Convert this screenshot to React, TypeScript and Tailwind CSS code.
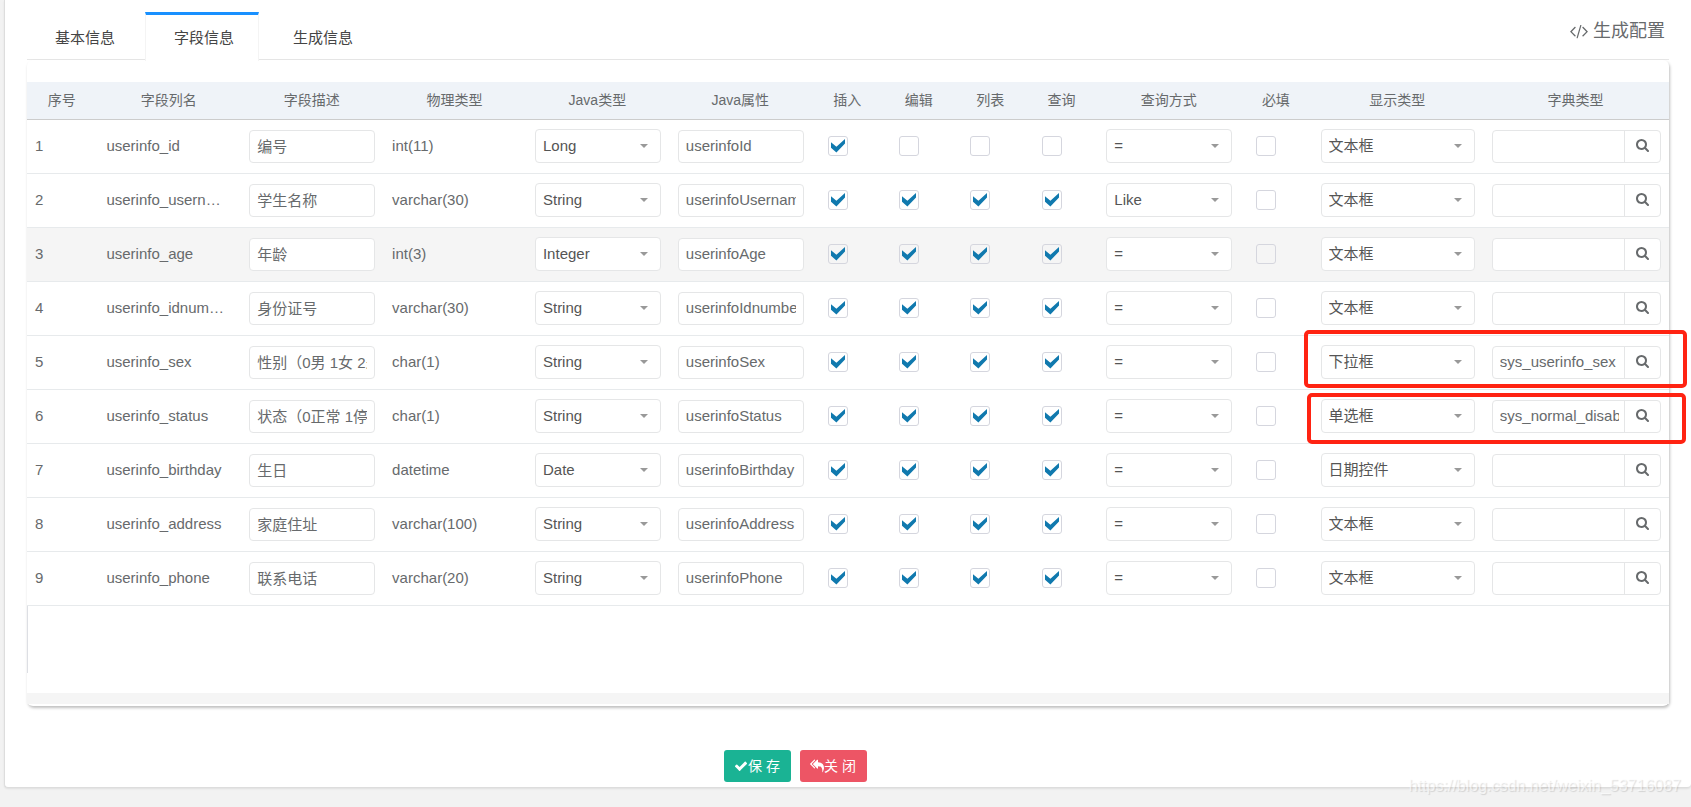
import { useState } from 'react'
import clsx from 'clsx'

interface Field {
  column: string
  comment: string
  dbType: string
  javaType: string
  javaField: string
  insert: boolean
  edit: boolean
  list: boolean
  query: boolean
  queryType: string
  htmlType: string
  dictType: string
}

const base = { insert: true, edit: true, list: true, query: true, queryType: '=', htmlType: '文本框', dictType: '' }

const fields: Field[] = [
  { ...base, column: 'userinfo_id', comment: '编号', dbType: 'int(11)', javaType: 'Long', javaField: 'userinfoId', edit: false, list: false, query: false },
  { ...base, column: 'userinfo_username', comment: '学生名称', dbType: 'varchar(30)', javaType: 'String', javaField: 'userinfoUsername', queryType: 'Like' },
  { ...base, column: 'userinfo_age', comment: '年龄', dbType: 'int(3)', javaType: 'Integer', javaField: 'userinfoAge' },
  { ...base, column: 'userinfo_idnumber', comment: '身份证号', dbType: 'varchar(30)', javaType: 'String', javaField: 'userinfoIdnumber' },
  { ...base, column: 'userinfo_sex', comment: '性别（0男 1女 2未知）', dbType: 'char(1)', javaType: 'String', javaField: 'userinfoSex', htmlType: '下拉框', dictType: 'sys_userinfo_sex' },
  { ...base, column: 'userinfo_status', comment: '状态（0正常 1停用）', dbType: 'char(1)', javaType: 'String', javaField: 'userinfoStatus', htmlType: '单选框', dictType: 'sys_normal_disable' },
  { ...base, column: 'userinfo_birthday', comment: '生日', dbType: 'datetime', javaType: 'Date', javaField: 'userinfoBirthday', htmlType: '日期控件' },
  { ...base, column: 'userinfo_address', comment: '家庭住址', dbType: 'varchar(100)', javaType: 'String', javaField: 'userinfoAddress' },
  { ...base, column: 'userinfo_phone', comment: '联系电话', dbType: 'varchar(20)', javaType: 'String', javaField: 'userinfoPhone' },
]

const columns = [
  { title: '序号', width: 'w-[4.35%]' },
  { title: '字段列名', width: 'w-[8.7%]' },
  { title: '字段描述', width: 'w-[8.7%]' },
  { title: '物理类型', width: 'w-[8.7%]' },
  { title: 'Java类型', width: 'w-[8.7%]' },
  { title: 'Java属性', width: 'w-[8.7%]' },
  { title: '插入', width: 'w-[4.35%]' },
  { title: '编辑', width: 'w-[4.35%]' },
  { title: '列表', width: 'w-[4.35%]' },
  { title: '查询', width: 'w-[4.35%]' },
  { title: '查询方式', width: 'w-[8.7%]' },
  { title: '必填', width: 'w-[4.35%]' },
  { title: '显示类型', width: 'w-[10.43%]' },
  { title: '字典类型', width: 'w-[11.27%]' },
]

const javaTypes = ['Long', 'String', 'Integer', 'Double', 'BigDecimal', 'Date']
const queryTypes = ['=', '!=', '>', '>=', '<', '<=', 'Like', 'Between']
const htmlTypes = ['文本框', '文本域', '下拉框', '单选框', '复选框', '日期控件']
const tabs = ['基本信息', '字段信息', '生成信息']

const iconPaths = {
  search:
    'M1152 704q0-185-131.5-316.5t-316.5-131.5-316.5 131.5-131.5 316.5 131.5 316.5 316.5 131.5 316.5-131.5 131.5-316.5zm512 832q0 52-38 90t-90 38q-54 0-90-38l-343-342q-179 124-399 124-143 0-273.5-55.5t-225-150-150-225-55.5-273.5 55.5-273.5 150-225 225-150 273.5-55.5 273.5 55.5 225 150 150 225 55.5 273.5q0 220-124 399l343 343q37 37 37 90z',
  check:
    'M1671 566q0 40-28 68l-724 724-136 136q-28 28-68 28t-68-28l-136-136-362-362q-28-28-28-68t28-68l136-136q28-28 68-28t68 28l294 295 656-657q28-28 68-28t68 28l136 136q28 28 28 68z',
  replyAll:
    'M640 1082v70q0 42-39 59-13 5-25 5-27 0-45-19l-512-512q-19-19-19-45t19-45l512-512q29-31 70-14 39 17 39 59v69l-397 398q-19 19-19 45t19 45zm1152 58q0 58-17 133.5t-38.5 138-48 125-40.5 90.5l-20 40q-8 17-28 17-6 0-9-1-25-8-23-34 43-400-106-565-64-71-170.5-110.5t-267.5-52.5v251q0 42-39 59-13 5-25 5-27 0-45-19l-512-512q-19-19-19-45t19-45l512-512q29-31 70-14 39 17 39 59v262q411 28 599 221 169 173 169 509z',
  code: 'M681 1399l-50 50q-10 10-23 10t-23-10l-466-466q-10-10-10-23t10-23l466-466q10-10 23-10t23 10l50 50q10 10 10 23t-10 23l-393 393 393 393q10 10 10 23t-10 23zm591-1067l-373 1291q-4 13-15.5 19.5t-23.5 2.5l-62-17q-13-4-19.5-15.5t-2.5-24.5l373-1291q4-13 15.5-19.5t23.5-2.5l62 17q13 4 19.5 15.5t2.5 24.5zm657 651l-466 466q-10 10-23 10t-23-10l-50-50q-10-10-10-23t10-23l393-393-393-393q-10-10-10-23t10-23l50-50q10-10 23-10t23 10l466 466q10 10 10 23t-10 23z',
}

function Icon({ name, className }: { name: keyof typeof iconPaths; className: string }) {
  return (
    <svg viewBox={name === 'code' ? '0 0 2048 1792' : '0 0 1792 1792'} className={className} fill="currentColor" aria-hidden="true">
      <path d={iconPaths[name]} />
    </svg>
  )
}

function TextField({ label, value }: { label: string; value: string }) {
  return (
    <input
      type="text"
      aria-label={label}
      defaultValue={value}
      className="block w-full h-[33px] px-[7px] pb-0.5 border border-[#e5e6e7] rounded bg-white outline-none focus:border-[#1ab394]"
    />
  )
}

function SelectField({ label, value, options }: { label: string; value: string; options: string[] }) {
  return (
    <div className="relative">
      <select
        aria-label={label}
        defaultValue={value}
        className="block w-full h-[34px] pl-[7px] pr-6 border border-[#e5e6e7] rounded bg-white text-[#555] appearance-none outline-none"
      >
        {options.map((option) => (
          <option key={option}>{option}</option>
        ))}
      </select>
      <svg viewBox="0 0 8 4" className="absolute right-[13px] top-[15px] w-2 h-1 text-[#999] pointer-events-none" fill="currentColor">
        <path d="M0 0h8L4 4z" />
      </svg>
    </div>
  )
}

function CheckField({ label, checked }: { label: string; checked: boolean }) {
  return (
    <div className="relative w-5 h-5 ml-[7px]">
      <input
        type="checkbox"
        aria-label={label}
        defaultChecked={checked}
        className="peer block w-5 h-5 border border-[#d5d6de] rounded-[3px] appearance-none"
      />
      <svg
        viewBox="0 0 14 14"
        className="absolute left-[3px] top-[3px] w-3.5 h-3.5 text-[#1079ae] opacity-0 peer-checked:opacity-100 pointer-events-none"
        fill="currentColor"
      >
        <path d="M0 3.2l5.4 4.6L14 0v4.5L5.4 13.6 0 8.8z" />
      </svg>
    </div>
  )
}

function DictField({ label, value }: { label: string; value: string }) {
  return (
    <div className="flex h-[33px] border border-[#e5e6e7] rounded bg-white">
      <div className="flex-1 min-w-0 pl-[7px] pr-[5px]">
        <input type="text" aria-label={label} defaultValue={value} className="block w-full h-full pb-0.5 outline-none" />
      </div>
      <button type="button" aria-label="选择字典" className="flex items-center justify-center w-9 border-l border-[#e5e6e7]">
        <Icon name="search" className="w-3.5 h-3.5" />
      </button>
    </div>
  )
}

export default function App() {
  const [active, setActive] = useState('字段信息')

  return (
    <div className="min-h-screen bg-[#f2f2f2] pl-1 pb-[17px] font-['Liberation_Sans','Noto_Sans_CJK_SC',sans-serif] text-[15px] leading-5 text-[#676a6c]">
      <div className="relative bg-white border-l border-b border-[#ddd] rounded-b shadow-[0_1px_2px_rgba(0,0,0,0.08)] pt-3 pb-[5px] pl-[22px] pr-[22px]">
        <header className="flex items-start justify-between h-12 border-b border-[#e7e7e7]">
          <nav className="flex gap-[5px] -ml-px h-[49px]" role="tablist">
            {tabs.map((tab) => (
              <button
                key={tab}
                type="button"
                role="tab"
                aria-selected={tab === active}
                onClick={() => setActive(tab)}
                className={clsx(
                  'pl-7 pr-6 border-t-3 border-x text-[#444]',
                  tab === active ? 'border-x-[#f4f4f4] border-t-[#1890ff] bg-white' : 'border-transparent',
                )}
              >
                {tab}
              </button>
            ))}
          </nav>
          <h1 className="flex items-center gap-1 mt-[7px] mr-1 text-lg leading-6">
            <Icon name="code" className="w-5 h-[18px]" />
            生成配置
          </h1>
        </header>

        <main className="pt-[22px] pb-px rounded-md shadow-[1px_2px_3px_rgba(0,0,0,0.25)]">
          <table className="w-full table-fixed border-collapse">
            <thead>
              <tr className="h-[37px] bg-[#eff3f8] border-b border-[#ccc] text-sm">
                {columns.map((column) => (
                  <th key={column.title} scope="col" className={clsx('pr-0.5 font-normal', column.width)}>
                    {column.title}
                  </th>
                ))}
              </tr>
            </thead>
            <tbody>
              {fields.map((field, index) => (
                <tr
                  key={field.column}
                  className={clsx('relative h-[54px] border-b border-[#e7eaec]', field.column === 'userinfo_age' && 'bg-[#f5f5f5]')}
                >
                  <td className="pl-2">{index + 1}</td>
                  <td className="pl-2 pr-4 truncate">{field.column}</td>
                  <td className="pl-2 pr-[9px]">
                    <TextField label="字段描述" value={field.comment} />
                  </td>
                  <td className="pl-2 pr-[9px] truncate">{field.dbType}</td>
                  <td className="pl-2 pr-[9px]">
                    <SelectField label="Java类型" value={field.javaType} options={javaTypes} />
                  </td>
                  <td className="pl-2 pr-[9px]">
                    <TextField label="Java属性" value={field.javaField} />
                  </td>
                  <td className="pl-2">
                    <CheckField label="插入" checked={field.insert} />
                  </td>
                  <td className="pl-2">
                    <CheckField label="编辑" checked={field.edit} />
                  </td>
                  <td className="pl-2">
                    <CheckField label="列表" checked={field.list} />
                  </td>
                  <td className="pl-2">
                    <CheckField label="查询" checked={field.query} />
                  </td>
                  <td className="pl-2 pr-[9px]">
                    <SelectField label="查询方式" value={field.queryType} options={queryTypes} />
                  </td>
                  <td className="pl-2">
                    <CheckField label="必填" checked={false} />
                  </td>
                  <td className="pl-2 pr-[9px]">
                    <SelectField label="显示类型" value={field.htmlType} options={htmlTypes} />
                  </td>
                  <td className="px-2">
                    <DictField label="字典类型" value={field.dictType} />
                    {field.column === 'userinfo_sex' && (
                      <div className="absolute -top-[5px] -right-[18px] w-[23.3%] h-[58px] border-4 border-[#ff2312] rounded-[5px] pointer-events-none" />
                    )}
                    {field.column === 'userinfo_status' && (
                      <div className="absolute top-1 -right-[17px] w-[23.1%] h-[51px] border-4 border-[#ff2312] rounded-[5px] pointer-events-none" />
                    )}
                  </td>
                </tr>
              ))}
            </tbody>
          </table>
          <div className="h-[67px] border-l border-[#dddfe4]" />
          <div className="mt-5 mb-px h-[11px] bg-[#f5f5f5]" />
        </main>

        <footer className="flex justify-center gap-[9px] mt-11 pr-[106px] text-sm text-white">
          <button type="button" className="flex items-center justify-center w-[67px] h-8 rounded-[3px] bg-[#1ab394]">
            <Icon name="check" className="w-3.5 h-3.5" />保 存
          </button>
          <button type="button" className="flex items-center justify-center w-[67px] h-8 rounded-[3px] bg-[#ed5565]">
            <Icon name="replyAll" className="w-3.5 h-3.5" />关 闭
          </button>
        </footer>

        <p className="absolute right-[10px] -bottom-[9px] text-base leading-5 text-white/60 [text-shadow:1px_1px_1px_rgba(0,0,0,0.13)]">
          https://blog.csdn.net/weixin_53716087
        </p>
      </div>
    </div>
  )
}
